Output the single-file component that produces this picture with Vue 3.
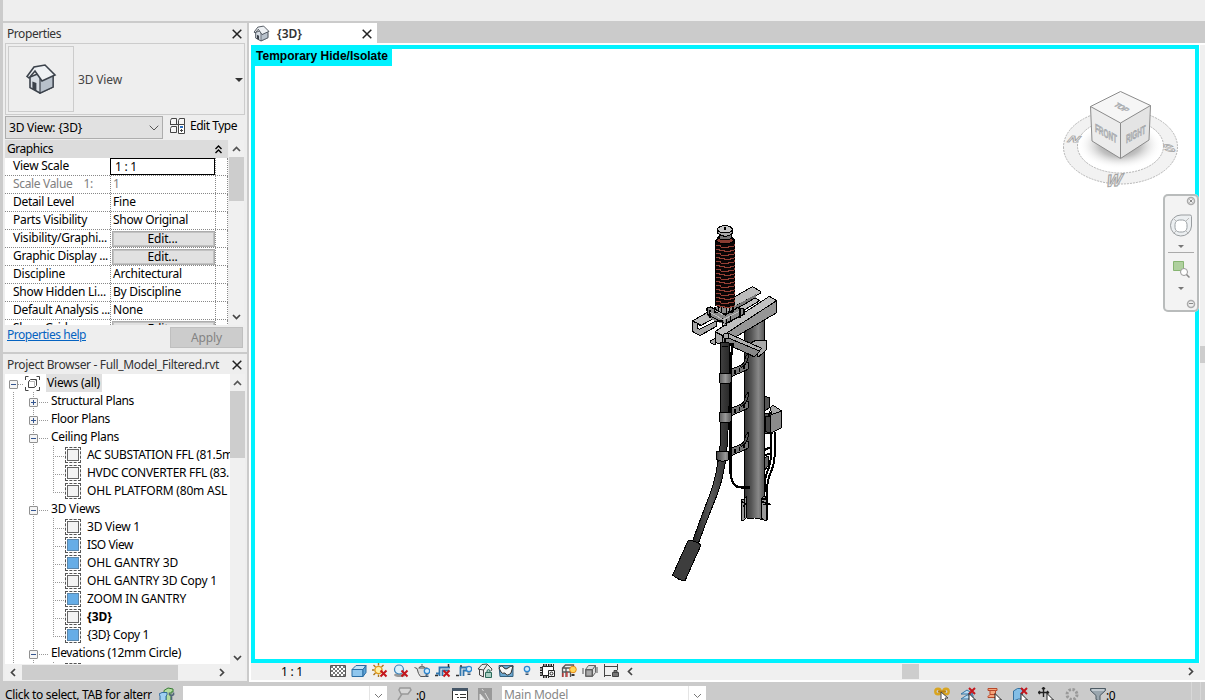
<script setup>
import { h } from 'vue'

// Spreads letter-spacing so that a label occupies the given width.
const vFit = {
  mounted(el, { value }) {
    const range = document.createRange()
    range.selectNodeContents(el)
    const w = range.getBoundingClientRect().width
    const n = el.textContent.length
    if (w && n) el.style.letterSpacing = (value - w) / n + 'px'
  }
}

const props = [
  { name: 'Scale Value    1:', w: 80, value: '1', vw: 5, muted: true },
  { name: 'Detail Level', w: 61, value: 'Fine', vw: 23 },
  { name: 'Parts Visibility', w: 74, value: 'Show Original', vw: 75 },
  { name: 'Visibility/Graphi...', w: 94, value: 'Edit...', vw: 30, button: true },
  { name: 'Graphic Display ...', w: 95, value: 'Edit...', vw: 30, button: true },
  { name: 'Discipline', w: 52, value: 'Architectural', vw: 69 },
  { name: 'Show Hidden Li...', w: 93, value: 'By Discipline', vw: 68 },
  { name: 'Default Analysis ...', w: 97, value: 'None', vw: 30 },
  { name: 'Show Grids', w: 60, value: 'Edit...', vw: 30, button: true }
]

const tree = [
  { t: 'Structural Plans', w: 83, d: 1, e: '+' },
  { t: 'Floor Plans', w: 59, d: 1, e: '+' },
  { t: 'Ceiling Plans', w: 68, d: 1, e: '-' },
  { t: 'AC SUBSTATION FFL (81.5m', w: 146, d: 2 },
  { t: 'HVDC CONVERTER FFL (83.', w: 142, d: 2 },
  { t: 'OHL PLATFORM (80m ASL', w: 140, d: 2, last: true },
  { t: '3D Views', w: 49, d: 1, e: '-' },
  { t: '3D View 1', w: 53, d: 2 },
  { t: 'ISO View', w: 46, d: 2, on: true },
  { t: 'OHL GANTRY 3D', w: 91, d: 2, on: true },
  { t: 'OHL GANTRY 3D Copy 1', w: 130, d: 2 },
  { t: 'ZOOM IN GANTRY', w: 99, d: 2, on: true },
  { t: '{3D}', w: 25, d: 2, bold: true },
  { t: '{3D} Copy 1', w: 62, d: 2, on: true, last: true },
  { t: 'Elevations (12mm Circle)', w: 130, d: 1, e: '-' },
  { t: '', w: 0, d: 2 }
]

const sheds = Array.from({ length: 16 }, (_, i) => 90 + i * 12)

const p = (d, fill = 'none', stroke = '#444', sw = 1) =>
  h('path', { d, fill, stroke, 'stroke-width': sw })
const redX = () => p('M8.5 7.5l6 6m0-6l-6 6', 'none', '#c4161c', 2)
const bulb = (x, y) => [
  h('circle', { cx: x, cy: y, r: 2.7, fill: '#d5ebfb', stroke: '#2f86cf', 'stroke-width': 1.3 }),
  p(`M${x - 1.5} ${y + 4}h3m-3 1.5h3`, 'none', '#35506b', 1)
]
const cursor = () => p('M9 6.5v9l2-2 1.5 3 1.5-.8-1.5-2.7h3z', '#fff', '#222')

const icons = {
  hatch: () => [
    p('M.5 2.5h15v11h-15z', '#fff', '#555'),
    ...[0, 1, 2, 3, 4].map(r => h('path', { d: `M${1 + (r % 2) * 2} ${4 + r * 2}h${14 - (r % 2) * 2}`, stroke: '#777', 'stroke-width': 2, 'stroke-dasharray': '2 2' }))
  ],
  box: () => [p('M1 6.5l4-4h10l-3 4z', '#c4e3f8', '#2b6da3'), p('M1 6.5h11v7H1z', '#8fc6ed', '#2b6da3'), p('M12 6.5l3-4v7l-3 4z', '#5fa4d8', '#2b6da3')],
  sun: () => [p('M6.5 0v2.500M0 7h2.500M1.500 2l2 2M11.500 2l-2 2M1.500 12l2-2M6.500 11.500V14', 'none', '#a8741d', 1.4), h('circle', { cx: 6.5, cy: 7, r: 3.6, fill: '#fff0a8', stroke: '#e09a1a', 'stroke-width': 1.3 }), redX()],
  shadow: () => [h('ellipse', { cx: 7, cy: 12, rx: 6, ry: 2, fill: '#999' }), h('circle', { cx: 6, cy: 6.5, r: 4.5, fill: '#ddf0fb', stroke: '#3b83ba', 'stroke-width': 1.2 }), redX()],
  teapot: () => [p('M.5 4.500l2.500 1 1.500 5 2 3h5l2-3V5H4.500M5 4.500q3-3 6 0M8 2.500V1', '#ddd', '#555'), ...bulb(13, 8)],
  cropx: () => [p('M4.500 13V4.500H15M1 10.500h3M7.500 13V7.500h7', 'none', '#3176ad', 1.8), p('M0 12.500h3M13.500 1v3', 'none', '#333', 1.5), redX()],
  cropb: () => [p('M4.500 13V4.500H12M7.500 13V7.500h3.500', 'none', '#3176ad', 1.8), p('M0 12.500h3M5 2v2', 'none', '#333', 1.5), ...bulb(13, 6)],
  lock: () => [p('M1 6l4-4.500 5-.5 5 5-1 2M2.500 6v6l4 2V7L1 6m5.500 1L10 2', '#eee', '#444'), p('M8.500 9.500h6v5h-6zM10 9V7.500q1.500-2 3 0V9', '#a9cfc3', '#2b6b5b')],
  glasses: () => [p('M1 2.500h14v11H2z', '#6ba6cf', '#35617f'), p('M1 5q3-4 5 0 2 2 4 0t5-2l-2 7q-4 4-6 0Q4 11 3 9z', '#f5f5f5', '#333')],
  bulb: () => bulb(8, 6),
  chip: () => [p('M2.500 3.500h11v9h-11z', '#fff', '#222'), h('path', { d: 'M3 2h11M3 14h6M1 4v9', stroke: '#222', 'stroke-width': 2, 'stroke-dasharray': '1.500 1', fill: 'none' }), p('M8.500 7.500h6v6h-6z', '#fff', '#222'), h('circle', { cx: 11.5, cy: 10.5, r: 1.5, fill: 'none', stroke: '#222' })],
  frame: () => [p('M1.500 14V5l3-3h8v8M1.500 5h8v9M5 5v9M1.500 9h8', 'none', '#555', 1.3), p('M2 10v4M6 9v5', 'none', '#c33', 1.3), h('circle', { cx: 12, cy: 6.5, r: 3.3, fill: '#ffd65a', stroke: '#e58a1a' }), p('M10.500 12h3', 'none', '#333', 2)],
  cubes: () => [p('M3.500 6.500l3-4h7v7l-3 4h-7z', '#ddd', '#666'), p('M3.500 6.500h7v7m0-7l3-4M1 5v6M15 4v6', 'none', '#555'), p('M4 7h6v6H4z', '#aaa', '#666')],
  dim: () => [p('M1.500 1v13M14.500 1v6M2 3.500h12M1 12.500h7', 'none', '#444'), p('M9.500 9.500h6v4h-6zM11 9V7.500h3V9', '#777', '#444')],
  link: () => [h('circle', { cx: 4, cy: 4.5, r: 2.7, fill: 'none', stroke: '#d9a520', 'stroke-width': 2.4 }), h('circle', { cx: 12, cy: 4.5, r: 2.7, fill: 'none', stroke: '#d9a520', 'stroke-width': 2.4 }), p('M4 4.500h8', 'none', '#b98210', 2), p('M7 5v9l2-2 1 3h2l-1-4h3z', '#fff', '#444')],
  under: () => [p('M1 7l6-4 6 4zM1 12l6-4h6v4z', '#b8dcf4', '#3875a2'), p('M9 1l6 6m0-6L9 7', 'none', '#c4161c', 2), cursor()],
  pin: () => [p('M2 1.500h9v2H9.500v4l2 2v1H2v-1l2-2v-4H2z', '#f4a67c', '#b7472a'), p('M4 3.500h5.500M4 7.500h5.500', 'none', '#b7472a'), cursor()],
  face: () => [p('M1.500 4l4-2.500h5V12l-4 0-5 2z', '#83bee6', '#35719f'), p('M9 1l6 6m0-6L9 7', 'none', '#c4161c', 2), cursor()],
  drag: () => [p('M5.500 0v10M0 5.500h11M4 2l1.500-1.500L7 2M2 4L.5 5.500 2 7M9 4l1.500 1.500L9 7', 'none', '#222', 1.4), cursor()],
  busy: () => h('circle', { cx: 8, cy: 7.5, r: 5, fill: 'none', stroke: '#999', 'stroke-width': 3, 'stroke-dasharray': '2.4 1.5' }),
  filter: () => [p('M.5 1.500h15v2l-5.500 5v6l-4-2v-4l-5.500-5z', '#9aa6ae', '#4d5a63'), p('M2 3h12', 'none', '#e8eef2')],
  people: () => [p('M5 3.500l4-2.500 5 1v3h-2v10H7V6H5z', '#b5dca0', '#357a34'), p('M1 15V9l-1-2 3-1.500h5V8l-1 1v6z', '#9fd0f2', '#346e9f'), p('M12.500 15V8.500m-2-3v2l2 1.500 2-1.500v-2', 'none', '#52667b', 1.6)],
  brush: () => [p('M4 1h10l1 2-3 4H5L3 3zM6 7l-4 6', '#d6d6d6', '#999', 1.5)],
  list: () => [p('M.5 1.500h15V15H.5z', '#fff', '#333'), p('M0 2.500h16', 'none', '#456', 3), p('M3 7.500h3M8 7.500h6M5 10.500h2M8 10.500h6M5 13.500h2M8 13.500h6', 'none', '#333')],
  select: () => [p('M1 1h14v14H1z', '#999', 'none'), p('M5 2l1.500 2M8 6l4 7M3 7v7l2-2 3 1z', '#eee', '#ddd')],
  house: () => [
    p('M2.500 7v5.300L7.500 15 14 12V6L10 4z', '#d7dde4', '#3b424b', 0.8),
    p('M7.500 15V8L10.500 4 14 7v5z', '#b8c1cb', '#3b424b', 0.6),
    p('M1 6.700L4.500 2 10 1l5 5-6.500 3-3.500-5L2 7.500z', '#eef1f4', '#3b424b', 0.8),
    p('M3.700 9.200l2 .8v4l-2-1z', '#3b424b', 'none')
  ]
}
const Icon = (a) =>
  h('svg', { viewBox: '0 0 16 16', width: a.size || 16, height: a.size || 16 }, icons[a.name]())
Icon.props = ['name', 'size']

const viewIcons = ['hatch', 'box', 'sun', 'shadow', 'teapot', 'cropx', 'cropb', 'lock', 'glasses', 'bulb', 'chip', 'frame', 'cubes', 'dim']
const selectIcons = ['link', 'under', 'pin', 'face', 'drag', 'busy', 'filter']
</script>

<template>
  <div class="app">
    <div class="ribbon"></div>
    <div class="body">
      <aside class="left">
        <section class="panel properties">
          <header class="title">
            <span v-fit="54">Properties</span>
            <svg class="x" width="10" height="10" viewBox="0 0 10 10"><path d="M.7.7l8.600 8.600m0-8.600L.7 9.300" stroke="#222" stroke-width="1.500" /></svg>
          </header>
          <div class="type-box">
            <div class="thumb"><Icon name="house" :size="32" /></div>
            <span class="type-name" v-fit="44">3D View</span>
            <i class="tri"></i>
          </div>
          <div class="type-row">
            <div class="combo">
              <span v-fit="73">3D View: {3D}</span>
              <svg width="10" height="6" viewBox="0 0 10 6"><path d="M.7.7L5 5 9.300.7" fill="none" stroke="#555" /></svg>
            </div>
            <svg class="edit-ico" width="17" height="17" viewBox="0 0 17 17" fill="#f5f5f5" stroke="#444">
              <path d="M1.500 2.500l1-2h5v6h-6zM9.500 2.500l1-2h5v6h-6zM1.500 10.500l1-2h5v6h-6z" />
              <path d="M1 6.500h14" />
              <path d="M9.500 6.500h6v9h-6z" fill="#fff" /><path d="M11 9h3" stroke="#2b6fc0" stroke-width="2" /><path d="M11 12.500h3M12.500 11v3" />
            </svg>
            <span v-fit="47">Edit Type</span>
          </div>
          <div class="grid-wrap">
            <div class="grid">
              <div class="group">
                <span v-fit="46">Graphics</span>
                <svg width="7" height="9" viewBox="0 0 7 9"><path d="M.5 4l3-3 3 3M.5 8l3-3 3 3" fill="none" stroke="#000" stroke-width="1.400" /></svg>
              </div>
              <div class="row">
                <div class="name"><span v-fit="56">View Scale</span></div>
                <div class="cell edit"><span v-fit="22">1 : 1</span></div>
                <div class="tail"></div>
              </div>
              <div v-for="r in props" :key="r.name" class="row" :class="{ muted: r.muted }">
                <div class="name"><span v-fit="r.w">{{ r.name }}</span></div>
                <div class="cell">
                  <div v-if="r.button" class="btn"><span v-fit="r.vw">{{ r.value }}</span></div>
                  <span v-else v-fit="r.vw">{{ r.value }}</span>
                </div>
                <div class="tail"></div>
              </div>
            </div>
            <div class="scroll">
              <svg width="9" height="6" viewBox="0 0 9 6"><path d="M1 5l3.500-3.500L8 5" fill="none" stroke="#555" stroke-width="1.700" /></svg>
              <b class="grip g1"></b>
              <svg class="end" width="9" height="6" viewBox="0 0 9 6"><path d="M1 1l3.500 3.500L8 1" fill="none" stroke="#444" stroke-width="1.700" /></svg>
            </div>
          </div>
          <footer class="foot">
            <a v-fit="79">Properties help</a>
            <div class="apply"><span v-fit="31">Apply</span></div>
          </footer>
        </section>

        <section class="panel browser">
          <header class="title">
            <span v-fit="212">Project Browser - Full_Model_Filtered.rvt</span>
            <svg class="x" width="10" height="10" viewBox="0 0 10 10"><path d="M.7.7l8.600 8.600m0-8.600L.7 9.300" stroke="#222" stroke-width="1.500" /></svg>
          </header>
          <div class="tree-wrap">
            <div class="tree">
              <div class="node root">
                <i class="exp minus"></i><i class="dash d5"></i>
                <svg class="views" width="15" height="15" viewBox="0 0 15 15" fill="none" stroke="#444">
                  <path d="M3.500.5H.5V4M11.500.5h3V4M3.500 14.500h-3V11M11.500 14.500h3V11" />
                  <path d="M3.500 5.500l2-2h6v6l-2 2h-6z" fill="#fff" /><path d="M4 5.500h5.500V11M9.500 5.500l1.500-1.500" stroke="#bbb" />
                </svg>
                <span class="hl"><span v-fit="53">Views (all)</span></span>
              </div>
              <div v-for="(n, i) in tree" :key="i" class="node">
                <i class="guide g"></i>
                <i class="guide g2"><b v-if="n.e" class="exp" :class="n.e === '-' ? 'minus' : 'plus'"></b></i>
                <template v-if="n.d === 1"><i class="dash d9"></i></template>
                <template v-else>
                  <i class="elbow" :class="{ last: n.last }"></i>
                  <i class="check" :class="{ on: n.on }"><b></b></i>
                </template>
                <span class="label" :class="{ bold: n.bold }" v-fit="n.w">{{ n.t }}</span>
              </div>
            </div>
            <div class="scroll s-tree">
              <svg width="9" height="6" viewBox="0 0 9 6"><path d="M1 5l3.500-3.500L8 5" fill="none" stroke="#555" stroke-width="1.700" /></svg>
              <b class="grip g3"></b>
              <svg class="end" width="9" height="6" viewBox="0 0 9 6"><path d="M1 1l3.500 3.500L8 1" fill="none" stroke="#444" stroke-width="1.700" /></svg>
            </div>
          </div>
          <div class="hscroll">
            <svg width="6" height="9" viewBox="0 0 6 9"><path d="M5 1L1.500 4.500 5 8" fill="none" stroke="#444" stroke-width="1.700" /></svg>
            <b></b>
            <svg class="r" width="6" height="9" viewBox="0 0 6 9"><path d="M1 1l3.500 3.500L1 8" fill="none" stroke="#444" stroke-width="1.700" /></svg>
          </div>
        </section>
      </aside>

      <main class="main">
        <div class="tabs">
          <div class="tab">
            <Icon name="house" :size="17" />
            <span v-fit="25">{3D}</span>
            <svg class="x" width="10" height="10" viewBox="0 0 10 10"><path d="M.7.7l8.600 8.600m0-8.600L.7 9.300" stroke="#222" stroke-width="1.500" /></svg>
          </div>
        </div>
        <div class="stage">
          <div class="canvas">
            <div class="banner"><span v-fit="132">Temporary Hide/Isolate</span></div>

            <svg class="model" width="140" height="375" viewBox="0 0 420 1125" stroke="#000" stroke-width="3" stroke-linejoin="round" shape-rendering="crispEdges">
              <defs>
                <linearGradient id="pole"><stop offset="0" stop-color="#333" /><stop offset=".35" stop-color="#555" /><stop offset=".7" stop-color="#888" /><stop offset="1" stop-color="#555" /></linearGradient>
                <linearGradient id="cable"><stop offset="0" stop-color="#222" /><stop offset=".5" stop-color="#5a5a5a" /><stop offset="1" stop-color="#2a2a2a" /></linearGradient>
                <linearGradient id="clamp"><stop offset="0" stop-color="#444" /><stop offset=".6" stop-color="#999" /><stop offset="1" stop-color="#555" /></linearGradient>
              </defs>
              <!-- junction box and its leads -->
              <path d="M313 545l14 2v32l-14 10zM313 595h13v18h-13zM313 635h13v20h-13z" fill="#555" />
              <path d="M330 580l8-10 27 18-28 12z" fill="#aaa" /><path d="M328 590l9 10v57l-22-8v-45h13z" fill="#444" /><path d="M332 600l33-12v50l-33 17z" fill="#8c8c8c" />
              <path d="M334 655v45q0 45-12 70t-4 60M345 650v60q-2 40-14 65t-10 80M313 705l20-9M313 722l20-8" fill="none" stroke-width="6" />
              <path d="M313 728l12-4 2 25-12 15z" fill="#666" />
              <!-- pole -->
              <path d="M253 315v590q10 8 22 5t28 3l10-3V315z" fill="url(#pole)" />
              <path d="M244 853h8l8-10v63l-8 9-8 1zM303 852l10-10 7 10v66l-7-2-10-8z" fill="#999" />
              <path d="M247 860l10 6-8 8M306 860l24 8-20 0M306 852h14" fill="none" stroke-width="4" />
              <path d="M253 838v70M320 835v80" stroke-width="5" fill="none" />
              <!-- back channel -->
              <path d="M97 318l180-103 23 13v8l-28 12-150 84z" fill="#bcbcbc" />
              <path d="M97 318v31l23 13 49-28v-16l-50 25-8-4v-13l12 4z" fill="#a5a5a5" />
              <path d="M122 332l55-30" fill="none" />
              <path d="M222 275l65-37v12l-50 30z" fill="#777" stroke="none" />
              <!-- front channel -->
              <path d="M215 290l70-41 14 8-70 42z" fill="#bcbcbc" />
              <path d="M253 325l60-20v65h-60z" fill="url(#pole)" stroke="none" />
              <path d="M253 330v42M313 305v68" fill="none" />
              <path d="M165 350l163-106 22 13-162 105z" fill="#c0c0c0" />
              <path d="M188 362l162-105v36L206 378l-18 11z" fill="#969696" />
              <path d="M165 350v32l23 8v-28zM150 377l15-6v19l-15-8z" fill="#aaa" />
              <!-- brace -->
              <path d="M272 384l15-8h33v28l-25 22z" fill="#ababab" />
              <path d="M193 360l12-5 100 45-25 25-85-45z" fill="#b0b0b0" /><path d="M195 365l104 43-16 17-88-40z" fill="#888" />
              <circle cx="198" cy="363" r="8" fill="#aaa" />
              <!-- support arms -->
              <g v-for="y in [0, 117, 237]" :key="y" :transform="`translate(0 ${y})`">
                <path d="M214 463l50-22v22l-50 22z" fill="#777" />
                <path d="M241 451q14-6 15-24l8-12v14q-5 22-20 28z" fill="#555" />
                <path d="M225 465v12M238 459v12M252 451v12" stroke-width="4" />
              </g>
              <!-- thin cable -->
              <path d="M214 383q0 20 5 0M219 385q-8 40-8 100v275q0 57 32 57h28" fill="none" stroke-width="7" />
              <!-- main cable -->
              <path d="M184 383h23v190l-4 100q-7 110-37 180-25 60-52 135l-17-8q25-70 50-135 25-60 35-170V383z" fill="url(#cable)" />
              <path d="M185 395h20" /><path d="M178 475h36v28q-18 8-36 0zM178 592h36v28q-18 8-36 0zM170 708h36v26q-18 9-36 0z" fill="url(#clamp)" />
              <path d="M85 975q20 2 38 15l-48 107q-22-2-37-17z" fill="#3d3d3d" />
              <!-- insulator base -->
              <path d="M140 280h20l35-12 42 12h15v20l-18 8-20 8-15 15-20-8-20-8-18-12z" fill="#8a8a8a" stroke="none" />
              <path d="M140 280l12-4 44 24 36-22 20 4v16l-56 28-52-26zM165 275v18h12v-18m8 0v20h14v-20m8 0v16h12v-14M150 285v25M188 308v24h12v-24M170 318h16M212 302v15M240 282v28" fill="none" stroke-width="4" />
              <path d="M150 292l40 22 48-25M165 286l25 14" fill="none" stroke="#bbb" />
              <path d="M178 280v8M204 278v10M193 314v14" stroke="#aaa" stroke-width="5" />
              <!-- insulator -->
              <path d="M168 75l10-12h36l10 12v195q-26 14-58 0z" fill="#0b0505" />
              <path d="M168 79l10-12h36l9 12q-28 14-55 0z" fill="#8a3c31" />
              <g fill="none" stroke="#963f34">
                <path v-for="(y, i) in sheds" :key="y" :d="i % 2 ? `M168 ${y}h10v4h14v4h18v-4h12v-3` : `M168 ${y}h14v6h24v-3h16v-6`" />
              </g>
              <path d="M178 53v18q18 8 35 0V53z" fill="#777" />
              <path d="M173 45v10q22 18 45 0V45z" fill="#aaa" /><ellipse cx="195" cy="43" rx="22" ry="11" fill="#c9c9c9" /><path d="M195 37v8" stroke-width="4" />
            </svg>

            <svg class="cube" width="130" height="110" viewBox="1055 85 130 110">
              <defs>
                <radialGradient id="sh"><stop offset="0" stop-color="#555" stop-opacity=".75" /><stop offset=".5" stop-color="#777" stop-opacity=".45" /><stop offset="1" stop-color="#fff" stop-opacity="0" /></radialGradient>
              </defs>
              <path d="M1063.500 147a57 37 0 1 0 114 0a57 37 0 1 0 -114 0zM1077.500 146a43 27 0 1 1 86 0a43 27 0 1 1 -86 0z" fill="#f2f2f2" fill-rule="evenodd" stroke="#b5b5b5" stroke-dasharray="2 1" />
              <ellipse cx="1120" cy="145" rx="42" ry="24" fill="url(#sh)" />
              <path d="M1120.500 91.500l30 14-30 17.500-30-16.500z" fill="#f6f6f6" /><path d="M1090.500 106.500l30 16.500v35.500l-28.500-17.500z" fill="#ececec" /><path d="M1120.500 123l30-17.500-1.500 34.500-28.500 18.500z" fill="#e4e4e4" />
              <path d="M1120.500 91.500l30 14-1.500 34.500-28.500 18.500-28.500-17.500-1.500-34.500zM1090.500 106.500l30 16.500 30-17.500M1120.500 123v35" fill="none" stroke="#8b8b8b" />
              <g class="face">
                <text transform="matrix(.72 .4 -.8 .48 1113 105.500)" textLength="17">TOP</text>
                <text transform="matrix(.84 .46 0 1.300 1095 131.500)" textLength="26" lengthAdjust="spacingAndGlyphs">FRONT</text>
                <text transform="matrix(.85 -.46 0 1.300 1126 143.500)" textLength="23" lengthAdjust="spacingAndGlyphs">RIGHT</text>
              </g>
              <g class="dir">
                <text transform="matrix(1.100 .05 -.55 .65 1066 142)">N</text>
                <text transform="matrix(1.200 .1 .3 .7 1165 151)">S</text>
                <text transform="matrix(1.150 -.1 -.4 1.250 1105 187)">W</text>
              </g>
            </svg>

            <div class="navbar">
              <svg width="36" height="118" viewBox="0 0 36 118" fill="none">
                <circle cx="28" cy="7" r="3.500" fill="#eee" stroke="#aaa" stroke-width="1.500" /><path d="M26.500 5.500l3 3m0-3l-3 3" stroke="#888" />
                <path d="M18 21h9q1.500 0 1.500 1.500v9.500a10.500 10.500 0 1 1-10.500-11z" fill="#eceff1" stroke="#999da0" /><rect x="12" y="26" width="12" height="12" rx="4.500" fill="#fff" stroke="#9aa0a4" /><path d="M10 24l3.500 3.500M26 24l-3.500 3.500M10.500 39.500l3.500-3.500M25.500 39.500L22 36" stroke="#bbb" />
                <path d="M15 51h6l-3 3z" fill="#777" /><path d="M5 58.500h26" stroke="#aaa" />
                <path d="M10.500 67.500h10v9h-10z" fill="#afd09e" stroke="#87b572" /><circle cx="21" cy="78" r="3.500" fill="#fff" stroke="#999" /><path d="M23.500 80.500l3 3" stroke="#888" stroke-width="1.500" />
                <path d="M15 93h6l-3 3z" fill="#777" /><circle cx="28" cy="110" r="3.500" fill="#eee" stroke="#aaa" stroke-width="1.500" /><path d="M26 109.500h4" stroke="#888" />
              </svg>
            </div>
          </div>
          <div class="vscroll"><b></b></div>
        </div>
        <div class="viewbar">
          <span class="scale" v-fit="22">1 : 1</span>
          <div class="vicons"><Icon v-for="n in viewIcons" :key="n" :name="n" /></div>
          <svg width="6" height="9" viewBox="0 0 6 9"><path d="M5 1L1.500 4.500 5 8" fill="none" stroke="#444" stroke-width="1.700" /></svg>
          <b class="vgrip"></b>
          <svg class="r" width="6" height="9" viewBox="0 0 6 9"><path d="M1 1l3.500 3.500L1 8" fill="none" stroke="#444" stroke-width="1.700" /></svg>
        </div>
      </main>
    </div>

    <div class="status">
      <span class="hint" v-fit="147">Click to select, TAB for alterr</span>
      <Icon class="s1" name="people" />
      <div class="field f1"><i><svg width="9" height="6" viewBox="0 0 9 6"><path d="M1 1l3.500 3.500L8 1" fill="none" stroke="#777" /></svg></i></div>
      <Icon class="s2" name="brush" />
      <span class="zero" v-fit="9">:0</span>
      <Icon class="s3" name="list" /><Icon class="s4" name="select" />
      <div class="field f2"><span v-fit="64">Main Model</span><i><svg width="9" height="6" viewBox="0 0 9 6"><path d="M1 1l3.500 3.500L8 1" fill="none" stroke="#777" /></svg></i></div>
      <div class="sel"><Icon v-for="n in selectIcons" :key="n" :name="n" /></div>
      <span class="zero z2" v-fit="9">:0</span>
      <i class="seps"></i>
    </div>
  </div>
</template>

<style>
html, body { overflow: hidden; background: #cdcdcd; }
</style>

<style scoped>
* { box-sizing: border-box; }
.app { width: 1205px; height: 700px; overflow: hidden; display: flex; flex-direction: column; background: #cbcbcb; font: 12px/16px "Noto Sans", "Open Sans", sans-serif; color: #000; white-space: pre; }
.app svg { display: block; flex: none; }
i { font-style: normal; }
.ribbon { height: 21px; margin-left: 3px; background: #eee; flex: none; }
.body { display: flex; height: 659px; margin-top: 2px; padding-left: 3px; flex: none; }
.left { width: 244px; display: flex; flex-direction: column; gap: 2px; flex: none; }
.panel { background: #eee; padding: 0 2px; overflow: hidden; }
.properties { height: 329px; flex: none; }
.browser { height: 327px; flex: none; }
.title { height: 20px; display: flex; align-items: center; justify-content: space-between; padding: 2px 3px 0 2px; color: #333; }
.type-box { height: 72px; border: 1px solid #ccc; display: flex; align-items: center; padding-left: 2px; width: 240px; }
.thumb { width: 66px; height: 66px; border: 1px solid #ccc; display: grid; place-items: center; }
.type-name { margin-left: 4px; padding-top: 2px; color: #444; flex: 1; }
.tri { border: 4px solid transparent; border-top-color: #333; border-bottom: 0; margin: 2px 1px 0 0; }
.type-row { display: flex; height: 25px; padding-top: 1px; }
.combo { width: 158px; height: 23px; background: #e1e1e1; border: 1px solid #adadad; display: flex; align-items: center; justify-content: space-between; padding: 0 3px; }
.edit-ico { margin: 2px 4px 0 6px; }
.type-row > span { margin-top: 2px; }
.grid-wrap { display: flex; height: 185px; }
.grid { width: 223px; overflow: hidden; background: #fff; margin-right: 1px; }
.group { height: 18px; background: #dcdcdc; display: flex; align-items: center; justify-content: space-between; padding: 0 6px 0 2px; }
.row { height: 18px; display: flex; line-height: 16px; background: repeating-linear-gradient(90deg, #888 0 1px, transparent 1px 2px) 0 100% / 100% 1px no-repeat; }
.name { width: 105px; padding-left: 8px; overflow: hidden; }
.cell { width: 105px; padding-left: 3px; }
.cell, .tail { background: repeating-linear-gradient(180deg, #888 0 1px, transparent 1px 2px) 0 0 / 1px 100% no-repeat; }
.tail { flex: 1; border-right: 1px dotted #888; }
.cell.edit { border: 1px solid #000; height: 17px; padding-left: 4px; line-height: 15px; background: #fff; }
.muted { color: #808080; }
.btn { height: 16px; margin: 1px 0 0 -1px; background: #e1e1e1; border: 1px solid #adadad; box-shadow: inset 0 0 0 1px #c2c2c2; text-align: center; line-height: 13px; padding-right: 2px; overflow: hidden; }
.scroll { width: 15px; background: #f0f0f0; display: flex; flex-direction: column; align-items: center; padding: 6px 0 5px; }
.scroll .end { margin-top: auto; }
.s-tree { padding-bottom: 3px; }
.grip { width: 15px; background: #cdcdcd; display: block; margin-top: 5px; }
.g1 { height: 44px; }
.g3 { height: 67px; }
.foot { display: flex; justify-content: space-between; padding: 2px 2px 0; }
.foot a { color: #0563c1; text-decoration: underline; text-underline-offset: 1px; }
.apply { width: 73px; height: 21px; background: #ccc; border: 1px solid #bfbfbf; color: #838383; text-align: center; line-height: 20px; }
.tree-wrap { display: flex; height: 290px; }
.tree { width: 225px; background: #fff; overflow: hidden; }
.node { height: 18px; display: flex; align-items: center; position: relative; }
.root { padding-left: 4px; }
.exp { width: 9px; height: 9px; border: 1px solid #919191; border-radius: 1px; display: block; flex: none; position: relative; top: 1px; background: linear-gradient(#34558f, #34558f) 1px 3px / 5px 1px no-repeat, #f5f5f5; }
.exp.plus { background: linear-gradient(#34558f, #34558f) 1px 3px / 5px 1px no-repeat, linear-gradient(#34558f, #34558f) 3px 1px / 1px 5px no-repeat, #f5f5f5; }
.dash { height: 1px; margin-top: 2px; background: repeating-linear-gradient(90deg, #999 0 1px, transparent 1px 2px); flex: none; }
.d5 { width: 6px; }
.d9 { width: 9px; margin-right: 3px; margin-left: 1px; }
.views { margin: 0 6px 0 1px; }
.hl { background: #e0e0e0; height: 18px; padding: 0 1px; line-height: 18px; width: 56px; }
.guide { height: 18px; flex: none; background: repeating-linear-gradient(180deg, #999 0 1px, transparent 1px 2px) 8px 0 / 1px 100% no-repeat; }
.g { width: 20px; }
.g2 { width: 13px; padding: 5px 0 0 4px; }
.elbow { width: 27px; height: 18px; flex: none; background: repeating-linear-gradient(180deg, #999 0 1px, transparent 1px 2px) 15px 0 / 1px 100% no-repeat, repeating-linear-gradient(90deg, #999 0 1px, transparent 1px 2px) 15px 10px / 11px 1px no-repeat; }
.elbow.last { background-size: 1px 11px, 11px 1px; }
.check { width: 16px; height: 16px; border: 1px dashed #555; padding: 1px; margin: -1px 6px 0 0; flex: none; }
.check b { display: block; width: 12px; height: 12px; border: 1px solid #666; background: #f3f3f3; }
.check.on b { background: #66ade6; border-color: #5b86aa; }
.bold { font-weight: 700; }
.hscroll { height: 16px; margin-top: 0; background: #f0f0f0; display: flex; align-items: center; padding: 0 20px 0 5px; width: 240px; }
.hscroll b { width: 156px; height: 15px; background: #cdcdcd; margin-left: 6px; }
.r { margin-left: auto; }
.main { flex: 1; margin-left: 2px; display: flex; flex-direction: column; background: #fff; }
.tabs { height: 20px; background: #cbcbcb; }
.tab { width: 128px; height: 20px; background: #fff; display: flex; align-items: center; padding: 1px 5px 0; color: #333; font-weight: 600; }
.tab > svg:first-child { margin-left: -1px; }
.tab span { margin-left: 7px; padding-top: 1px; }
.tab .x { margin-left: auto; }
.stage { display: flex; height: 618px; margin: 2px 0 2px 2px; gap: 1px; }
.canvas { width: 948px; border: 4px solid #00f2ff; position: relative; background: #fff; flex: none; }
.banner { background: #00f2ff; height: 17px; width: 137px; padding-left: 1px; font: bold 12px/14px "Liberation Sans", sans-serif; }
.vscroll { flex: 1; background: #f0f0f0; padding-top: 301px; }
.vscroll b { display: block; height: 17px; background: #cdcdcd; }
.model { position: absolute; left: 405px; top: 166px; }
.cube { position: absolute; left: 800px; top: 36px; }
.face text { font: bold 9px "Liberation Sans", sans-serif; fill: #b9bcc0; stroke: #8f9296; stroke-width: .35; }
.dir text { font: bold 14px "Liberation Sans", sans-serif; fill: #eee; stroke: #a2a2a2; stroke-width: .9; }
.navbar { position: absolute; left: 908px; top: 145px; width: 36px; height: 118px; border-radius: 5px; background: #f3f3f3; box-shadow: inset 0 0 0 2px #b9bcbc; }
.viewbar { height: 17px; margin: -2px 0 0 2px; padding: 0 11px 0 30px; background: #f0f0f0; display: flex; align-items: center; }
.vicons { display: flex; gap: 5px; margin: -2px 8px 0 27px; }
.vgrip { width: 17px; height: 15px; background: #cdcdcd; margin-left: 269px; }
.status { flex: 1; padding-left: 5px; display: flex; align-items: flex-start; overflow: hidden; }
.status > span { margin-top: 5px; }
.hint { width: 147px; overflow: hidden; }
.status > svg { margin-top: 5px; }
.status > .s1 { margin-left: 7px; }
.field { height: 20px; margin-top: 4px; background: #fff; display: flex; width: 204px; color: #888; }
.field > span { padding-top: 1px; }
.field i { width: 18px; border-left: 1px solid #e5e5e5; margin-left: auto; padding: 7px 4px; }
.f1 { margin-left: 8px; }
.f2 { margin-left: 9px; padding-left: 2px; }
.status > .s2 { margin-left: 9px; }
.zero { margin-left: 4px; width: 9px; }
.status > .zero { margin-top: 6px; }
.status > .s3 { margin-left: 27px; }
.status > .s4 { margin-left: 9px; }
.sel { display: flex; gap: 10px; margin: 5px 0 0 228px; }
.status > .z2 { margin-left: 0; }
.seps { margin-left: 76px; width: 10px; height: 20px; border: solid #d8d8d8; border-width: 0 1px; }
</style>
